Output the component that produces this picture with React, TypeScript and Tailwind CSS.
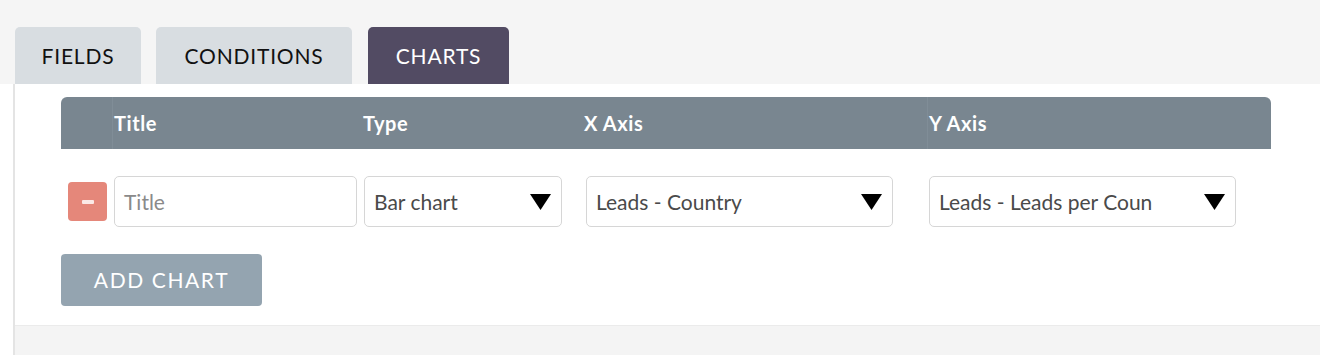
import React from "react";

const font = { fontFamily: "Lato, 'Noto Sans', sans-serif" };

function Triangle() {
  return (
    <svg width="21" height="16" viewBox="0 0 21 16" className="shrink-0">
      <polygon points="0,0 21,0 10.5,16" fill="#000" />
    </svg>
  );
}

function Select({ value, width }: { value: string; width: string }) {
  return (
    <div
      className={`${width} h-[51px] rounded-[5px] border border-[#d6d6d6] bg-white flex items-center justify-between pl-[9px] pr-[10px] text-[21px] text-[#4a4a4a]`}
    >
      <span className="whitespace-nowrap overflow-hidden">{value}</span>
      <Triangle />
    </div>
  );
}

export default function App() {
  return (
    <div style={font} className="w-[1320px] h-[355px] bg-white overflow-hidden">
      {/* Tabs band */}
      <div className="h-[84px] bg-[#f5f5f5] flex items-end pl-[15px] gap-[15px]">
        <div className="h-[57px] w-[126px] rounded-t-[5px] bg-[#d8dde1] flex items-center justify-center text-[21px] text-[#111] tracking-[0.8px]">
          FIELDS
        </div>
        <div className="h-[57px] w-[196px] rounded-t-[5px] bg-[#d8dde1] flex items-center justify-center text-[21px] text-[#111] tracking-[0.8px]">
          CONDITIONS
        </div>
        <div className="ml-[1px] h-[57px] w-[141px] rounded-t-[5px] bg-[#524b63] flex items-center justify-center text-[21px] text-white tracking-[0.8px]">
          CHARTS
        </div>
      </div>

      {/* Panel */}
      <div className="flex h-[271px]">
        <div className="w-[13px] bg-white" />
        <div className="flex-1 flex flex-col border-l-[2px] border-[#e4e4e4]">
          <div className="bg-white h-[242px] border-b border-[#ebebeb] pl-[46px] pt-[13px]">
            {/* Header */}
            <div className="w-[1210px] grid grid-cols-[51px_250px_221px_344px_344px] h-[52px] bg-[#798690] rounded-t-[6px] text-white font-bold text-[20px] tracking-[0.6px]">
              <div />
              <div className="flex items-center pl-[1px] border-l border-[#808d97]">Title</div>
              <div className="flex items-center pl-[1px]">Type</div>
              <div className="flex items-center pl-[1px]">X Axis</div>
              <div className="flex items-center pl-[1px] border-l border-[#808d97]">Y Axis</div>
            </div>
            {/* Row */}
            <div className="w-[1210px] grid grid-cols-[51px_250px_221px_344px_344px] mt-[27px] items-center">
              <div className="pl-[7px]">
                <div className="w-[39px] h-[39px] rounded-[4px] bg-[#e5877a] flex items-center justify-center">
                  <div className="w-[12px] h-[4px] bg-[#fbe9e6] rounded-[1px]" />
                </div>
              </div>
              <div className="pl-[2px]">
                <div className="w-[243px] h-[51px] rounded-[5px] border border-[#d6d6d6] bg-white flex items-center pl-[9px] text-[21px] text-[#8a8a8a]">
                  Title
                </div>
              </div>
              <div className="pl-[2px]">
                <Select value="Bar chart" width="w-[198px]" />
              </div>
              <div className="pl-[3px]">
                <Select value="Leads - Country" width="w-[307px]" />
              </div>
              <div className="pl-[2px]">
                <Select value="Leads - Leads per Coun" width="w-[307px]" />
              </div>
            </div>
            {/* Add chart */}
            <div className="mt-[27px] w-[201px] h-[52px] rounded-[4px] bg-[#94a4b0] flex items-center justify-center text-white text-[21px] tracking-[1.6px]">
              ADD CHART
            </div>
          </div>
          <div className="flex-1 bg-[#f4f4f4]" />
        </div>
      </div>
    </div>
  );
}
